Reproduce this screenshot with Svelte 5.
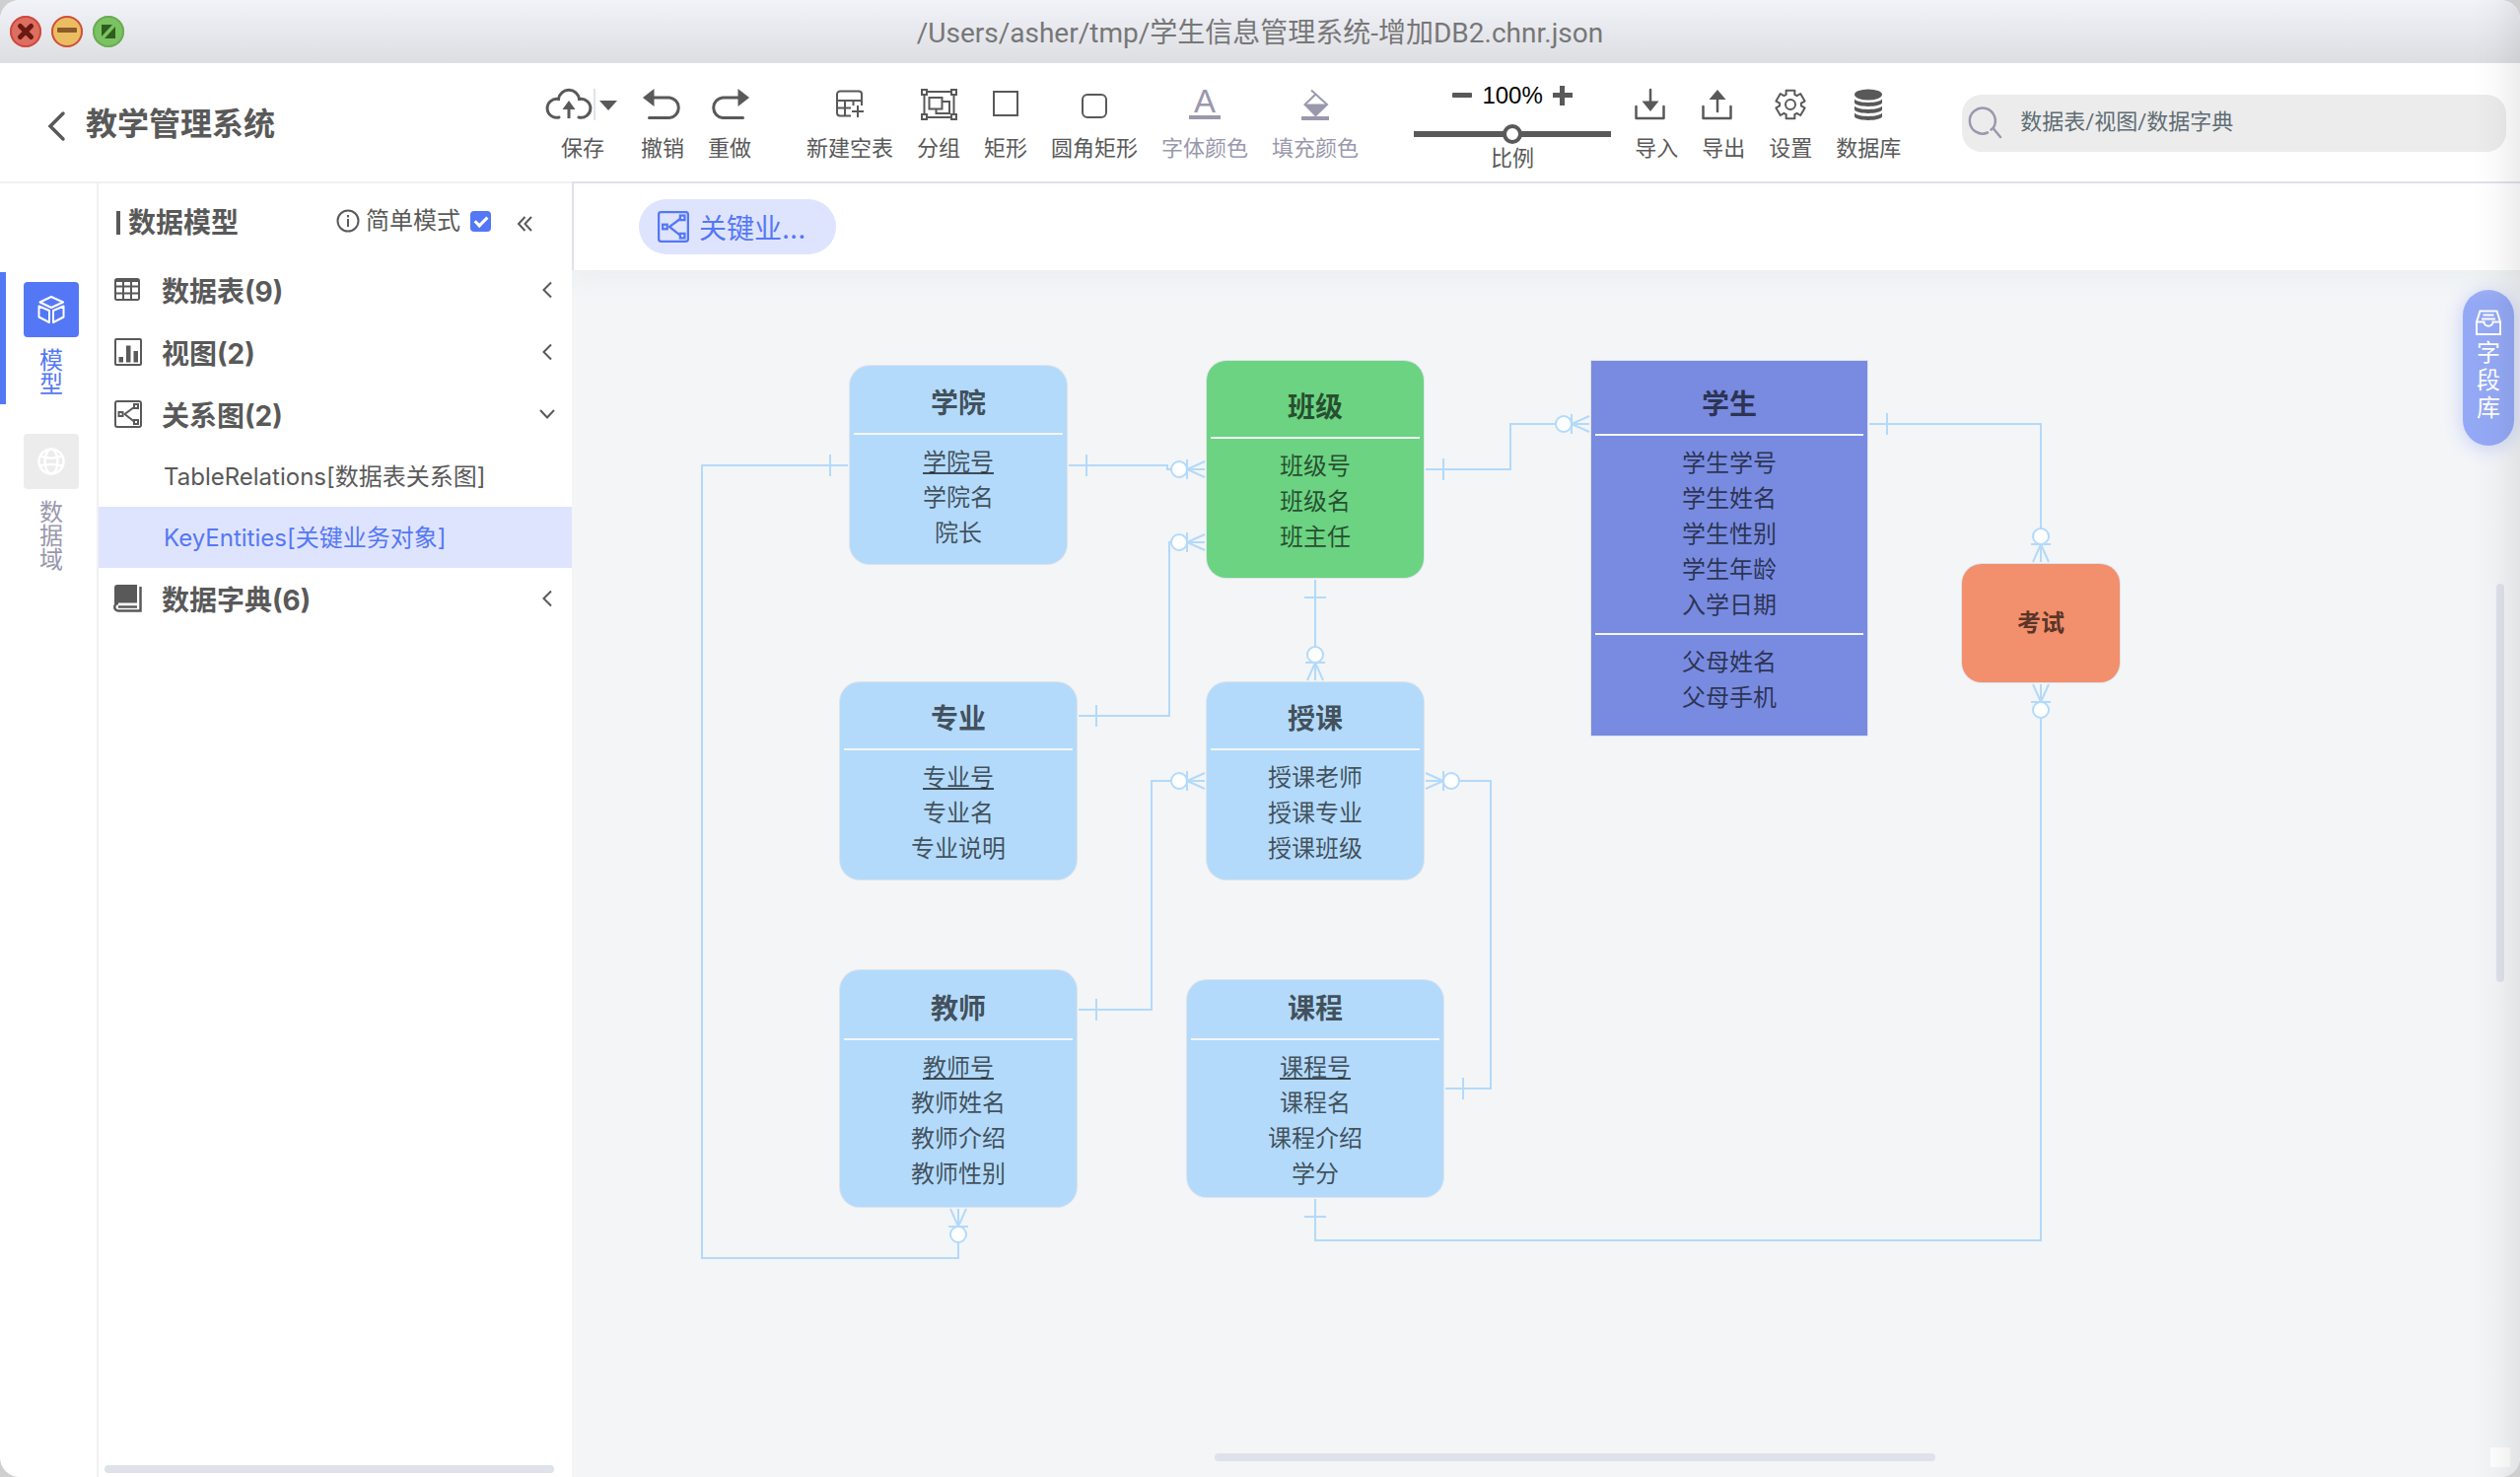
<script>
  let simpleMode = true;
  let zoom = 100;
  let keyword = '';

  const gear = Array.from({ length: 6 }, (_, i) =>
    [[-17, 15], [17, 15], [23, 11], [37, 11]].map(([d, r]) => {
      const a = ((i * 60 + d - 90) * Math.PI) / 180;
      return `${(16 + r * Math.cos(a)).toFixed(1)},${(16 + r * Math.sin(a)).toFixed(1)}`;
    }).join(' ')
  ).join(' ');

  const relation = '<g fill="none" stroke="currentColor" stroke-width="2"><rect x="1" y="1" width="26" height="26" rx="2"/><path d="M20 7 10.500 14 20 21.500"/><rect x="20" y="4" width="4" height="4"/><rect x="20" y="20" width="4" height="4"/><rect x="4.500" y="12" width="4" height="4"/></g>';

  const icons = {
    save: { w: 70, h: 32, body: '<path d="M11 29a9.500 9.500 0 1 1-.5-18.500a10.600 10.600 0 0 1 21 0a9.500 9.500 0 1 1-.5 18.500" fill="none" stroke="currentColor" stroke-width="3" stroke-linecap="round"/><path d="M21 12l6.500 9h-5v9h-3v-9h-5z" fill="currentColor"/><path d="M46 0h2v32h-2z" fill="#dfe3eb"/><path d="M52 12h18l-9 10z" fill="currentColor"/>' },
    undo: { w: 40, h: 32, body: '<path d="M10 9h17a10.300 10.300 0 0 1 0 20.500H6.500" fill="none" stroke="currentColor" stroke-width="3" stroke-linecap="round"/><path d="M0 9 11.500 0v18z" fill="currentColor"/>' },
    redo: { w: 40, h: 32, body: '<path d="M30 9H13a10.300 10.300 0 0 0 0 20.500h20.500" fill="none" stroke="currentColor" stroke-width="3" stroke-linecap="round"/><path d="M40 9 28.500 0v18z" fill="currentColor"/>' },
    table: { w: 28, h: 32, body: '<g fill="none" stroke="currentColor" stroke-width="2"><path d="M15 27.500H4a3 3 0 0 1-3-3V5.500a3 3 0 0 1 3-3h19a3 3 0 0 1 3 3V17M1 12h25M1 19.500h14M9 12v15M17.500 12v5M22 17v12M16 23h12"/></g>' },
    group: { w: 37, h: 32, body: '<g fill="none" stroke="currentColor" stroke-width="2"><path d="M7 3h23M7 29h23M3.500 7v18M33.500 7v18"/><path d="M1 1h5v5H1zM31 1h5v5h-5zM1 26h5v5H1zM31 26h5v5h-5z"/><path d="M8.500 9h13v11.500h-13zM21.500 13H29v12H15.500v-4.500"/></g>' },
    rect: { w: 26, h: 32, body: '<path d="M1 3h24v24H1z" fill="none" stroke="currentColor" stroke-width="2"/>' },
    round: { w: 26, h: 32, body: '<rect x="1" y="6" width="24" height="23" rx="5" fill="none" stroke="currentColor" stroke-width="2"/>' },
    font: { w: 32, h: 32, body: '<text x="16" y="24" text-anchor="middle" font-size="33" font-family="Liberation Sans, sans-serif" fill="currentColor">A</text><path d="M0 27h32v4H0z" fill="currentColor"/>' },
    fill: { w: 28, h: 32, body: '<path d="M10 1.500l4.500 4L26 16 14.500 27 3.500 16 14.500 5.500" fill="none" stroke="currentColor" stroke-width="2"/><path d="M3 15.500h23L14.500 27zM0 28h28v4H0z" fill="currentColor"/>' },
    import: { w: 31, h: 32, body: '<path d="M1.500 18v12h28V18M16 1v14" fill="none" stroke="currentColor" stroke-width="2.500" stroke-linecap="round" stroke-linejoin="round"/><path d="M7.500 12.500h17L16 23z" fill="currentColor"/>' },
    export: { w: 31, h: 32, body: '<path d="M1.500 18v12h28V18M16 23V8" fill="none" stroke="currentColor" stroke-width="2.500" stroke-linecap="round" stroke-linejoin="round"/><path d="M7.500 11h17L16 1z" fill="currentColor"/>' },
    setting: { w: 32, h: 32, body: `<g fill="none" stroke="currentColor" stroke-width="2" stroke-linejoin="round"><polygon points="${gear}"/><circle cx="16" cy="16" r="5"/></g>` },
    db: { w: 28, h: 32, body: '<g fill="currentColor"><ellipse cx="14" cy="6" rx="14" ry="5.500"/><path d="M0 10.500c3 4.500 25 4.500 28 0v4c-3 4.500-25 4.500-28 0zM0 17.500c3 4.500 25 4.500 28 0v4c-3 4.500-25 4.500-28 0zM0 24.500c3 4.500 25 4.500 28 0v4c-3 4.500-25 4.500-28 0z"/></g>' },
    search: { w: 32, h: 32, body: '<path d="M18 26.500a13 13 0 1 1 5.500-4.500L31 31M23.500 22l-2 1.500" fill="none" stroke="currentColor" stroke-width="2.500" stroke-linecap="round"/>' },
    back: { w: 18, h: 30, body: '<path d="M16 2 3 15l13 13" fill="none" stroke="currentColor" stroke-width="3.500" stroke-linecap="round"/>' },
    cube: { w: 28, h: 28, body: '<path d="M14 1l12 5.500-12 5.500L2.500 6.500zM1.500 10.500l10.500 4.500v12L1.500 21.500zM26.500 10.500 16 15v12l10.500-5.500z" fill="none" stroke="currentColor" stroke-width="2" stroke-linejoin="round"/>' },
    globe: { w: 28, h: 28, body: '<g fill="none" stroke="currentColor" stroke-width="2.500"><circle cx="14" cy="14" r="12.500"/><ellipse cx="14" cy="14" rx="6.500" ry="12.500"/><path d="M3.500 8.500c6 3 15 3 21 0M3 18.500c6-2 16-2 22 0"/></g>' },
    grid: { w: 28, h: 28, body: '<path d="M2.500 3h21A1.500 1.500 0 0 1 25 4.500v18a1.500 1.500 0 0 1-1.500 1.500h-21A1.500 1.500 0 0 1 1 22.500v-18A1.500 1.500 0 0 1 2.500 3zM1 10.500h24M1 17.500h24M9 5v19M17 5v19" fill="none" stroke="currentColor" stroke-width="2"/><path d="M1 3h24v3H1z" fill="currentColor"/>' },
    chart: { w: 28, h: 28, body: '<rect x="1" y="1" width="26" height="26" rx="1" fill="none" stroke="currentColor" stroke-width="2"/><path d="M4.500 19h4.500v5.500H4.500zM12 7.500h4.500v17H12zM19.500 13H24v11.500h-4.500z" fill="currentColor"/>' },
    relation: { w: 28, h: 28, body: relation },
    dict: { w: 28, h: 28, body: '<path d="M3 0h20v18.500H4a3.500 3.500 0 0 0-2.500 1H0V3a3 3 0 0 1 3-3z" fill="currentColor"/><path d="M26.500 2v24.500H4a3.500 3.500 0 0 1 0-7.500M4 22.500h19" fill="none" stroke="currentColor" stroke-width="2.500"/>' },
    left: { w: 12, h: 18, body: '<path d="M10 1.500 2.500 9l7.500 7.500" fill="none" stroke="currentColor" stroke-width="2"/>' },
    down: { w: 18, h: 12, body: '<path d="M2 2l7 7.500L16 2" fill="none" stroke="currentColor" stroke-width="2"/>' },
    collapse: { w: 16, h: 16, body: '<path d="M8.500 1 2 8l6.500 7M15 1 8.500 8l6.500 7" fill="none" stroke="currentColor" stroke-width="2"/>' },
    info: { w: 24, h: 24, body: '<circle cx="12" cy="12" r="10.500" fill="none" stroke="currentColor" stroke-width="2"/><path d="M11 6h2v2.500h-2zM11 10h2v8h-2z" fill="currentColor"/>' },
    box: { w: 26, h: 26, body: '<path d="M4.500 1.500h17l3.500 11V25H1V12.500zM1 12.500h7.500c0 5.500 9 5.500 9 0H25M7.500 5.500h11M6 9.500h14" fill="none" stroke="currentColor" stroke-width="2"/>' },
    close: { w: 32, h: 32, body: '<path d="M10.500 10.500l11 11M21.500 10.500l-11 11" stroke="#6b1a11" stroke-width="5" stroke-linecap="round"/>' },
    minimize: { w: 32, h: 32, body: '<rect x="6" y="12" width="20" height="5" rx="1" fill="#8a5a2b"/>' },
    zoom: { w: 32, h: 32, body: '<path d="M9 9h11L9 21zM23 11v12H12z" fill="#2f5d1e"/>' },
    minus: { w: 20, h: 20, body: '<rect x="0" y="7" width="20" height="5" rx="1" fill="currentColor"/>' },
    plus: { w: 20, h: 20, body: '<path d="M7 0h5v7h8v5h-8v8H7v-8H0V7h7z" fill="currentColor"/>' },
  };

  const fileTools = [
    { icon: 'save', label: '保存' },
    { icon: 'undo', label: '撤销' },
    { icon: 'redo', label: '重做' },
  ];
  const drawTools = [
    { icon: 'table', label: '新建空表' },
    { icon: 'group', label: '分组' },
    { icon: 'rect', label: '矩形' },
    { icon: 'round', label: '圆角矩形' },
    { icon: 'font', label: '字体颜色', disabled: true },
    { icon: 'fill', label: '填充颜色', disabled: true },
  ];
  const appTools = [
    { icon: 'import', label: '导入', start: true },
    { icon: 'export', label: '导出', start: true },
    { icon: 'setting', label: '设置' },
    { icon: 'db', label: '数据库' },
  ];

  const menu = [
    { icon: 'grid', name: '数据表(9)' },
    { icon: 'chart', name: '视图(2)' },
    {
      icon: 'relation',
      name: '关系图(2)',
      children: [
        { name: 'TableRelations[数据表关系图]' },
        { name: 'KeyEntities[关键业务对象]', active: true },
      ],
    },
    { icon: 'dict', name: '数据字典(6)' },
  ];

  // scroll offset of the canvas
  const view = { x: 580, y: 274 };

  const nodes = [
    { x: 862, y: 371, w: 220, h: 201, name: '学院', groups: [['学院号', '学院名', '院长']], key: true },
    { x: 1224, y: 366, w: 220, h: 220, name: '班级', groups: [['班级号', '班级名', '班主任']], fill: '#6bd382' },
    { x: 1614, y: 366, w: 280, h: 380, name: '学生', groups: [['学生学号', '学生姓名', '学生性别', '学生年龄', '入学日期'], ['父母姓名', '父母手机']], fill: '#788be0', square: true },
    { x: 1990, y: 572, w: 160, h: 120, name: '考试', groups: [], fill: '#f28f6c' },
    { x: 852, y: 692, w: 240, h: 200, name: '专业', groups: [['专业号', '专业名', '专业说明']], key: true },
    { x: 1224, y: 692, w: 220, h: 200, name: '授课', groups: [['授课老师', '授课专业', '授课班级']] },
    { x: 852, y: 984, w: 240, h: 240, name: '教师', groups: [['教师号', '教师姓名', '教师介绍', '教师性别']], key: true },
    { x: 1204, y: 994, w: 260, h: 220, name: '课程', groups: [['课程号', '课程名', '课程介绍', '学分']], key: true },
  ];

  const links = [
    'M860 472H712V1276H972V1226',
    'M1084 472H1184V476H1222',
    'M1094 726H1186V550H1222',
    'M1334 588V690',
    'M1446 476H1532V430H1612',
    'M1896 430H2070V570',
    'M2070 694V1258H1334V1216',
    'M1094 1024H1168V792H1222',
    'M1446 792H1512V1104H1466',
  ];

  // rotation 0 points from the node edge to the right
  const ones = [
    [862, 472, 180], [1082, 472, 0], [1092, 726, 0], [1334, 586, 90], [1444, 476, 0],
    [1894, 430, 0], [1334, 1214, 90], [1092, 1024, 0], [1464, 1104, 0],
  ];
  const manys = [
    [972, 1224, 90], [1224, 476, 180], [1224, 550, 180], [1334, 692, 270], [1614, 430, 180],
    [2070, 572, 270], [2070, 692, 90], [1224, 792, 180], [1444, 792, 0],
  ];
</script>

{#snippet icon(name)}
  <svg width={icons[name].w} height={icons[name].h} viewBox="0 0 {icons[name].w} {icons[name].h}" aria-hidden="true">{@html icons[name].body}</svg>
{/snippet}

{#snippet tool(item)}
  <button class="tool" class:start={item.start} disabled={item.disabled}>
    {@render icon(item.icon)}
    <span>{item.label}</span>
  </button>
{/snippet}

<div class="window">
  <div class="title-bar">
    <div class="lights">
      <button class="light red" aria-label="close">{@render icon('close')}</button>
      <button class="light yellow" aria-label="minimize">{@render icon('minimize')}</button>
      <button class="light green" aria-label="zoom">{@render icon('zoom')}</button>
    </div>
    <div class="file-path">/Users/asher/tmp/学生信息管理系统-增加DB2.chnr.json</div>
  </div>

  <header>
    <div class="brand">
      <button class="back" aria-label="back">{@render icon('back')}</button>
      <h1>教学管理系统</h1>
    </div>
    <div class="toolbar">
      <div class="tool-group">
        {#each fileTools as item}{@render tool(item)}{/each}
      </div>
      <div class="tool-group">
        {#each drawTools as item}{@render tool(item)}{/each}
      </div>
      <div class="tool-group">
        <div class="scale">
          <div class="scale-value">
            <button aria-label="zoom out" on:click={() => zoom -= 10}>{@render icon('minus')}</button>
            <span>{zoom}%</span>
            <button aria-label="zoom in" on:click={() => zoom += 10}>{@render icon('plus')}</button>
          </div>
          <input type="range" id="scale" min="0" max="200" bind:value={zoom}>
          <label for="scale">比例</label>
        </div>
        {#each appTools as item}{@render tool(item)}{/each}
      </div>
    </div>
    <label class="search">
      {@render icon('search')}
      <input type="text" placeholder="数据表/视图/数据字典" aria-label="search" bind:value={keyword}>
    </label>
  </header>

  <div class="body">
    <nav class="rail">
      <button class="rail-item active">
        <span class="rail-icon">{@render icon('cube')}</span>
        <span class="rail-text">模型</span>
      </button>
      <button class="rail-item">
        <span class="rail-icon">{@render icon('globe')}</span>
        <span class="rail-text">数据域</span>
      </button>
    </nav>

    <aside>
      <div class="panel-head">
        <h2>数据模型</h2>
        <label class="simple">
          {@render icon('info')}
          <span>简单模式</span>
          <input type="checkbox" bind:checked={simpleMode}>
        </label>
        <button class="collapse" aria-label="collapse">{@render icon('collapse')}</button>
      </div>
      <div class="menu">
        {#each menu as item}
          <button class="menu-item">
            {@render icon(item.icon)}
            <span class="menu-name">{item.name}</span>
            <span class="arrow">{@render icon(item.children ? 'down' : 'left')}</span>
          </button>
          {#each item.children || [] as child}
            <button class="menu-child" class:active={child.active}>{child.name}</button>
          {/each}
        {/each}
      </div>
      <div class="panel-scroll"></div>
    </aside>

    <main>
      <div class="tabs">
        <button class="tab">
          {@render icon('relation')}
          <span>关键业...</span>
        </button>
      </div>
      <div class="canvas">
        <svg class="links" aria-hidden="true">
          <g transform="translate({-view.x} {-view.y})" fill="none" stroke="#b3dafa" stroke-width="2">
            {#each links as d}
              <path {d} />
            {/each}
            {#each ones as [x, y, r]}
              <path d="M20-11V11" transform="translate({x} {y}) rotate({r})" />
            {/each}
            {#each manys as [x, y, r]}
              <g transform="translate({x} {y}) rotate({r})">
                <path d="M2-8 20 0 2 8M20-10V10" />
                <circle cx="28" cy="0" r="8" fill="#fff" />
              </g>
            {/each}
          </g>
        </svg>
        {#each nodes as node}
          <div
            class="node"
            class:square={node.square}
            class:key={node.key}
            class:single={!node.groups.length}
            style:left="{node.x - view.x}px"
            style:top="{node.y - view.y}px"
            style:width="{node.w}px"
            style:height="{node.h}px"
            style:background={node.fill}
          >
            <div class="node-name">{node.name}</div>
            {#each node.groups as fields}
              <ul>
                {#each fields as field}
                  <li><span>{field}</span></li>
                {/each}
              </ul>
            {/each}
          </div>
        {/each}
        <div class="scroll-y"></div>
        <div class="scroll-x"></div>
        <div class="scroll-corner"></div>
        <button class="library">
          {@render icon('box')}
          <span>字段库</span>
        </button>
      </div>
    </main>
  </div>
  <div class="edge"></div>
</div>

<style>
  :global(body) {
    background: #cfcfcf;
  }

  .window {
    position: relative;
    display: flex;
    flex-direction: column;
    min-height: 100vh;
    border-radius: 20px;
    overflow: hidden;
    background: #fff;
    color: #595959;
    font-family: Inter, "Noto Sans CJK SC", sans-serif;
    font-size: 24px;
  }

  svg {
    display: block;
    flex: none;
    overflow: visible;
  }

  button {
    padding: 0;
    border: none;
    background: none;
    color: inherit;
    font: inherit;
    cursor: pointer;
  }

  h1, h2, ul {
    margin: 0;
    padding: 0;
  }

  .title-bar {
    display: grid;
    grid-template-columns: 1fr auto 1fr;
    align-items: center;
    height: 64px;
    background: linear-gradient(#f2f3f9, #dddee2);
  }

  .lights {
    display: flex;
    gap: 10px;
    padding-left: 10px;
  }

  .light {
    width: 32px;
    height: 32px;
    border-radius: 50%;
  }

  .red {
    background: #dc6e62;
    box-shadow: inset 0 0 0 2px #cf4a3c;
  }

  .yellow {
    background: #ebbd62;
    box-shadow: inset 0 0 0 2px #cf4f3e;
  }

  .green {
    background: #7bc262;
    box-shadow: inset 0 0 0 2px #6cab54;
  }

  .file-path {
    padding-top: 4px;
    font-family: Roboto, "Noto Sans CJK SC", sans-serif;
    font-size: 28px;
    line-height: 40px;
    color: #777;
  }

  header {
    display: flex;
    align-items: flex-start;
    height: 120px;
    border-bottom: 2px solid #f1f1f3;
  }

  .brand {
    display: flex;
    align-items: center;
    gap: 21px;
    width: 508px;
    height: 120px;
    padding-left: 48px;
  }

  h1 {
    padding-top: 3px;
    font-size: 32px;
    line-height: 48px;
  }

  .back {
    padding-top: 8px;
  }

  .toolbar {
    display: flex;
    gap: 56px;
    white-space: nowrap;
  }

  .tool-group {
    display: flex;
    align-items: flex-start;
    gap: 24px;
  }

  .tool {
    display: flex;
    flex-direction: column;
    align-items: center;
    gap: 12px;
    padding-top: 26px;
    font-size: 22px;
    line-height: 32px;
  }

  .tool:disabled {
    color: #9a98ad;
  }

  .tool.start {
    align-items: flex-start;
  }

  .scale {
    display: flex;
    flex-direction: column;
    align-items: center;
    width: 200px;
    padding-top: 18px;
    font-size: 22px;
    line-height: 28px;
  }

  .scale-value {
    display: flex;
    align-items: center;
    gap: 10px;
    height: 30px;
    margin-bottom: 14px;
    font-family: "Liberation Sans", sans-serif;
    font-size: 24px;
  }

  .scale-value span {
    color: #000;
  }

  .scale input {
    appearance: none;
    width: 200px;
    height: 20px;
    margin: 0;
    background: linear-gradient(#595959, #595959) center / 100% 6px no-repeat;
  }

  .scale input::-webkit-slider-thumb {
    appearance: none;
    width: 20px;
    height: 20px;
    border: 4px solid #595959;
    border-radius: 50%;
    background: #fff;
    box-sizing: border-box;
  }

  .search {
    display: flex;
    flex: 1;
    align-items: center;
    gap: 19px;
    height: 58px;
    margin: 32px 14px 0 62px;
    padding: 0 8px 2px;
    border-radius: 20px;
    background: #ececec;
    color: #9a98ad;
    box-sizing: border-box;
  }

  .search input {
    flex: 1;
    min-width: 0;
    padding: 0;
    border: none;
    outline: none;
    background: none;
    font-family: Roboto, "Noto Sans CJK SC", sans-serif;
    font-size: 22px;
    line-height: 32px;
    color: #5f6d74;
  }

  .search input::placeholder {
    color: #5f6d74;
    opacity: 1;
  }

  .body {
    display: flex;
    flex: 1;
  }

  .rail {
    display: flex;
    flex-direction: column;
    gap: 20px;
    width: 98px;
    padding-top: 90px;
    border-right: 2px solid #f1f1f3;
  }

  .rail-item {
    display: flex;
    flex-direction: column;
    align-items: center;
    gap: 12px;
    padding: 10px 0 8px;
    border-left: 6px solid transparent;
    color: #9a98ad;
  }

  .rail-icon {
    display: flex;
    align-items: center;
    justify-content: center;
    width: 56px;
    height: 56px;
    border-radius: 4px;
    background: #ececec;
    color: #fff;
  }

  .rail-text {
    width: 24px;
    line-height: 24px;
    word-break: break-all;
  }

  .rail-item.active {
    border-color: #5478f5;
    color: #5478f5;
  }

  .rail-item.active .rail-icon {
    background: #5478f5;
  }

  aside {
    display: flex;
    flex-direction: column;
    width: 480px;
  }

  .panel-head {
    display: flex;
    align-items: center;
    height: 77px;
    padding: 0 40px 0 18px;
  }

  h2 {
    display: flex;
    align-items: center;
    gap: 8px;
    margin-right: auto;
    padding-top: 3px;
    font-size: 28px;
    line-height: 40px;
  }

  h2::before {
    content: '';
    width: 4px;
    height: 24px;
    background: #595959;
  }

  .simple {
    display: flex;
    align-items: center;
    gap: 6px;
    padding-bottom: 2px;
    line-height: 32px;
  }

  .simple input {
    appearance: none;
    width: 21px;
    height: 21px;
    margin: 2px 0 0 4px;
    border-radius: 4px;
    background: #5478f5;
  }

  .simple input:checked::after {
    content: '';
    display: block;
    width: 5px;
    height: 10px;
    margin: 3px 0 0 7px;
    border: solid #fff;
    border-width: 0 3px 3px 0;
    transform: rotate(45deg);
  }

  .collapse {
    margin-left: 26px;
    padding-top: 4px;
  }

  .menu {
    display: flex;
    flex-direction: column;
  }

  .menu-item {
    display: flex;
    align-items: center;
    height: 63px;
    padding: 0 16px 2px;
    font-size: 28px;
    font-weight: bold;
    box-sizing: border-box;
  }

  .menu-name {
    margin: 0 auto 0 20px;
  }

  .arrow {
    display: flex;
    justify-content: center;
    width: 18px;
  }

  .menu-child {
    height: 62px;
    padding: 0 0 3px 66px;
    text-align: left;
    box-sizing: border-box;
  }

  .menu-child.active {
    background: #dfe4fe;
    color: #5478f5;
  }

  .panel-scroll {
    height: 8px;
    margin: auto 18px 4px 6px;
    border-radius: 4px;
    background: #dfe2ea;
  }

  main {
    display: flex;
    flex: 1;
    flex-direction: column;
    min-width: 0;
    margin-top: -2px;
    overflow: hidden;
  }

  .tabs {
    position: relative;
    display: flex;
    align-items: center;
    height: 88px;
    padding-left: 66px;
    border-top: 2px solid #dfe2ea;
    border-left: 2px solid #dfe2ea;
    background: #fff;
    box-shadow: 0 6px 24px #e9eeee;
    z-index: 1;
  }

  .tab {
    display: flex;
    align-items: center;
    gap: 10px;
    width: 200px;
    height: 56px;
    padding-left: 19px;
    border-radius: 28px;
    background: #dfe4fe;
    color: #5478f5;
    font-size: 28px;
    box-sizing: border-box;
  }

  .tab svg {
    width: 32px;
    height: 32px;
  }

  .canvas {
    position: relative;
    flex: 1;
    min-height: 1120px;
    background: #f3f5f7;
    overflow: hidden;
  }

  .links {
    position: absolute;
    inset: 0;
    width: 100%;
    height: 100%;
  }

  .node {
    position: absolute;
    display: flex;
    flex-direction: column;
    justify-content: center;
    padding: 0 4px;
    border-radius: 20px;
    background: #b3dafa;
    box-shadow: 0 0 0 1px #dfe3eb;
    color: rgba(0, 0, 0, 0.65);
    text-align: center;
    line-height: 36px;
    box-sizing: border-box;
  }

  .node.square {
    border-radius: 0;
  }

  .node-name {
    padding-top: 4px;
    font-size: 28px;
    font-weight: bold;
    line-height: 60px;
  }

  .single .node-name {
    padding-top: 0;
    font-size: 24px;
  }

  ul {
    padding: 10px 0;
    border-top: 2px solid #f3f5f7;
    list-style: none;
  }

  .key li:first-child {
    text-decoration: underline;
  }

  .scroll-y, .scroll-x, .scroll-corner {
    position: absolute;
    border-radius: 4px;
    background: #dfe2ea;
  }

  .scroll-y {
    top: 26%;
    right: 16px;
    width: 8px;
    height: 33%;
  }

  .scroll-x {
    left: 33%;
    bottom: 16px;
    width: 37%;
    height: 8px;
  }

  .scroll-corner {
    right: 10px;
    bottom: 10px;
    width: 20px;
    height: 20px;
    border-radius: 0;
    background: #fff;
  }

  .library {
    position: absolute;
    top: 20px;
    right: 6px;
    display: flex;
    flex-direction: column;
    align-items: center;
    gap: 4px;
    width: 52px;
    height: 158px;
    padding-top: 20px;
    border-radius: 26px;
    background: #94a9f6;
    box-shadow: 0 2px 20px #c3cdf8;
    color: #fff;
    box-sizing: border-box;
  }

  .library span {
    width: 24px;
    line-height: 28px;
    word-break: break-all;
  }

  /* shade along the right window edge */
  .edge {
    position: absolute;
    top: 0;
    right: 0;
    bottom: 0;
    width: 50px;
    background: linear-gradient(to right, transparent, rgba(0, 0, 0, 0.02) 50%, rgba(0, 0, 0, 0.07));
    pointer-events: none;
    z-index: 2;
  }
</style>
